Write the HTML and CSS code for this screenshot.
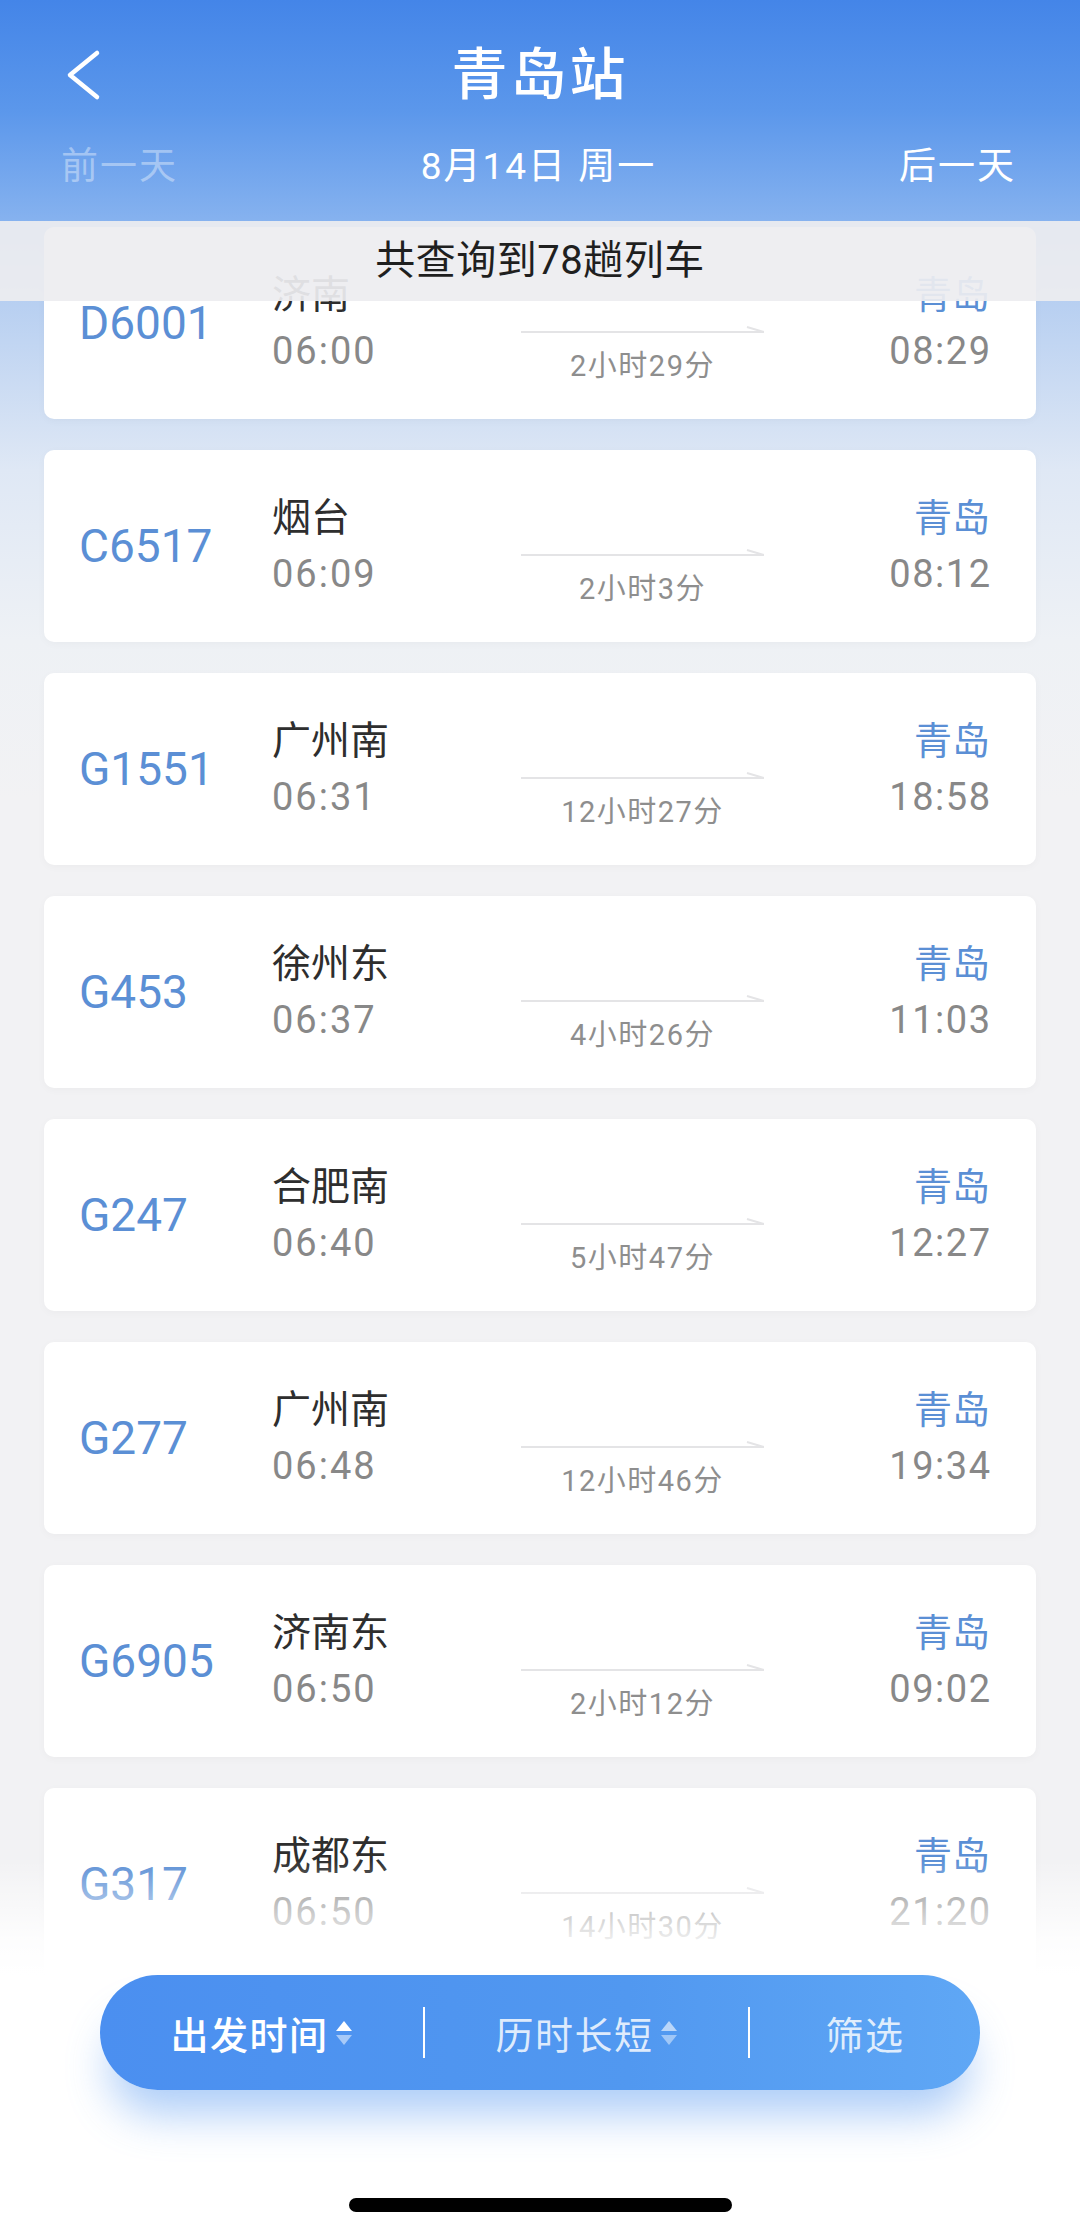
FILE: index.html
```html
<!DOCTYPE html>
<html lang="zh-CN">
<head>
    <meta charset="UTF-8">
    <title>青岛站</title>
    <link rel="stylesheet" href="styles.css">
</head>
<body>
<div class="screen">
    <header class="topbar">
        <div class="nav">
            <a class="back" href="#">
                <svg width="36" height="52" viewBox="0 0 36 52"><path d="M31 4 L4 26 L31 48" fill="none" stroke="#fff" stroke-width="4.5" stroke-linecap="round" stroke-linejoin="round"/></svg>
            </a>
            <h1 class="title">青岛站</h1>
            <span></span>
        </div>
        <div class="dates">
            <span class="off">前一天</span>
            <span>8月14日 周一</span>
            <span>后一天</span>
        </div>
    </header>

    <div class="result-tip">共查询到78趟列车</div>

    <ul class="train-list">
        <li class="train-item">
            <div class="train-no">D6001</div>
            <div class="depart"><span class="station">济南</span><span class="time">06:00</span></div>
            <div class="route"><svg width="243" height="12" viewBox="0 0 243 12"><path d="M0 10 H243 L226 5" fill="none" stroke="#e4e4e6" stroke-width="2"/></svg><span class="duration">2小时29分</span></div>
            <div class="arrive"><span class="station">青岛</span><span class="time">08:29</span></div>
        </li>
        <li class="train-item">
            <div class="train-no">C6517</div>
            <div class="depart"><span class="station">烟台</span><span class="time">06:09</span></div>
            <div class="route"><svg width="243" height="12" viewBox="0 0 243 12"><path d="M0 10 H243 L226 5" fill="none" stroke="#e4e4e6" stroke-width="2"/></svg><span class="duration">2小时3分</span></div>
            <div class="arrive"><span class="station">青岛</span><span class="time">08:12</span></div>
        </li>
        <li class="train-item">
            <div class="train-no">G1551</div>
            <div class="depart"><span class="station">广州南</span><span class="time">06:31</span></div>
            <div class="route"><svg width="243" height="12" viewBox="0 0 243 12"><path d="M0 10 H243 L226 5" fill="none" stroke="#e4e4e6" stroke-width="2"/></svg><span class="duration">12小时27分</span></div>
            <div class="arrive"><span class="station">青岛</span><span class="time">18:58</span></div>
        </li>
        <li class="train-item">
            <div class="train-no">G453</div>
            <div class="depart"><span class="station">徐州东</span><span class="time">06:37</span></div>
            <div class="route"><svg width="243" height="12" viewBox="0 0 243 12"><path d="M0 10 H243 L226 5" fill="none" stroke="#e4e4e6" stroke-width="2"/></svg><span class="duration">4小时26分</span></div>
            <div class="arrive"><span class="station">青岛</span><span class="time">11:03</span></div>
        </li>
        <li class="train-item">
            <div class="train-no">G247</div>
            <div class="depart"><span class="station">合肥南</span><span class="time">06:40</span></div>
            <div class="route"><svg width="243" height="12" viewBox="0 0 243 12"><path d="M0 10 H243 L226 5" fill="none" stroke="#e4e4e6" stroke-width="2"/></svg><span class="duration">5小时47分</span></div>
            <div class="arrive"><span class="station">青岛</span><span class="time">12:27</span></div>
        </li>
        <li class="train-item">
            <div class="train-no">G277</div>
            <div class="depart"><span class="station">广州南</span><span class="time">06:48</span></div>
            <div class="route"><svg width="243" height="12" viewBox="0 0 243 12"><path d="M0 10 H243 L226 5" fill="none" stroke="#e4e4e6" stroke-width="2"/></svg><span class="duration">12小时46分</span></div>
            <div class="arrive"><span class="station">青岛</span><span class="time">19:34</span></div>
        </li>
        <li class="train-item">
            <div class="train-no">G6905</div>
            <div class="depart"><span class="station">济南东</span><span class="time">06:50</span></div>
            <div class="route"><svg width="243" height="12" viewBox="0 0 243 12"><path d="M0 10 H243 L226 5" fill="none" stroke="#e4e4e6" stroke-width="2"/></svg><span class="duration">2小时12分</span></div>
            <div class="arrive"><span class="station">青岛</span><span class="time">09:02</span></div>
        </li>
        <li class="train-item">
            <div class="train-no">G317</div>
            <div class="depart"><span class="station">成都东</span><span class="time">06:50</span></div>
            <div class="route"><svg width="243" height="12" viewBox="0 0 243 12"><path d="M0 10 H243 L226 5" fill="none" stroke="#e4e4e6" stroke-width="2"/></svg><span class="duration">14小时30分</span></div>
            <div class="arrive"><span class="station">青岛</span><span class="time">21:20</span></div>
        </li>
    </ul>

    <div class="bottom-panel">
        <div class="sort-bar">
            <div class="sort-item active">出发时间
                <svg class="sort-icon" width="18" height="30" viewBox="0 0 18 30"><path d="M1 13 L9 3 L17 13 Z" fill="#fff"/><path d="M1 17 L17 17 L9 27 Z" fill="rgba(255,255,255,0.5)"/></svg>
            </div>
            <div class="sort-item">历时长短
                <svg class="sort-icon" width="18" height="30" viewBox="0 0 18 30"><path d="M1 13 L9 3 L17 13 Z" fill="rgba(255,255,255,0.6)"/><path d="M1 17 L17 17 L9 27 Z" fill="rgba(255,255,255,0.45)"/></svg>
            </div>
            <div class="sort-item">筛选</div>
        </div>
        <div class="home-bar"></div>
    </div>
</div>
</body>
</html>
```

FILE: styles.css
```css
*{
    padding: 0;
    margin: 0;
    box-sizing: border-box;
}
body{
    font-family: Roboto, "Noto Sans CJK SC", sans-serif;
    background: #f2f2f4;
}
ul,li{
    list-style: none;
}
.screen{
    width: 1080px;
    height: 2234px;
    position: relative;
    overflow: hidden;
    background: linear-gradient(180deg, #4485e8 0, #5b97eb 110px, #86b2ef 221px, #b7cff1 300px, #dfe8f5 470px, #eef1f5 640px, #f2f2f4 800px, #f2f2f4 100%);
}

/* header */
.topbar{
    height: 221px;
    padding-top: 40px;
    color: #fff;
}
.nav{
    display: grid;
    grid-template-columns: 1fr auto 1fr;
    align-items: center;
    height: 70px;
}
.nav .back{
    display: flex;
    padding-left: 66px;
}
.nav .title{
    font-size: 56px;
    font-weight: 500;
    line-height: 70px;
    letter-spacing: 3px;
}
.dates{
    display: flex;
    justify-content: space-between;
    margin-top: 32px;
    padding: 0 64px 0 61px;
    height: 50px;
    line-height: 50px;
    font-size: 37px;
    letter-spacing: 2px;
}
.dates .off{
    color: rgba(255,255,255,0.38);
}

.result-tip{
    position: absolute;
    top: 221px;
    left: 0;
    right: 0;
    z-index: 5;
    height: 80px;
    line-height: 80px;
    text-align: center;
    font-size: 40px;
    letter-spacing: 0.5px;
    color: #1f1f1f;
    background: rgba(237,237,240,0.93);
}

/* list */
.train-list{
    padding: 6px 44px 0;
}
.train-list .train-item{
    display: flex;
    align-items: center;
    height: 192px;
    margin-bottom: 31px;
    padding: 0 46px 0 35px;
    background: #fff;
    border-radius: 10px;
    box-shadow: 0 2px 8px rgba(0,0,0,0.03);
}
.train-item .train-no{
    width: 193px;
    font-size: 46px;
    color: #5b8fd5;
}
.train-item .depart,
.train-item .arrive{
    display: flex;
    flex-direction: column;
}
.train-item .depart{
    width: 249px;
}
.train-item .arrive{
    flex: 1;
    align-items: flex-end;
}
.train-item .station{
    font-size: 39px;
    line-height: 50px;
    color: #2e2e2e;
}
.train-item .arrive .station{
    font-size: 38px;
    color: #5b8fd5;
}
.train-item .time{
    margin-top: 6px;
    font-size: 38px;
    line-height: 50px;
    letter-spacing: 2px;
    color: #888;
}
.train-item .arrive .time{
    letter-spacing: 1.5px;
    margin-right: -1.5px;
}
.train-item .route{
    align-self: flex-start;
    width: 243px;
    padding-top: 95px;
    text-align: center;
}
.train-item .route svg{
    display: block;
}
.train-item .duration{
    display: block;
    margin-top: 15px;
    font-size: 29px;
    line-height: 34px;
    letter-spacing: 1.5px;
    color: #8e8e8e;
}

/* bottom */
.bottom-panel{
    position: absolute;
    left: 0;
    right: 0;
    bottom: 0;
    z-index: 6;
    height: 374px;
    padding-top: 115px;
    background: linear-gradient(180deg, rgba(255,255,255,0) 0, rgba(255,255,255,0.85) 80px, #fff 115px);
}
.sort-bar{
    display: flex;
    align-items: center;
    height: 115px;
    margin: 0 100px;
    border-radius: 58px;
    background: linear-gradient(90deg, #4b8ff0 0%, #5198f0 60%, #5fa7f5 100%);
    box-shadow: 0 34px 44px -10px rgba(74,144,240,0.45);
    color: rgba(255,255,255,0.82);
    font-size: 38px;
    letter-spacing: 1.5px;
}
.sort-bar .sort-item{
    display: flex;
    justify-content: center;
    align-items: center;
    gap: 6px;
    height: 51px;
}
.sort-bar .sort-item:nth-child(1){
    width: 323px;
}
.sort-bar .sort-item:nth-child(2){
    width: 325px;
    border-left: 2px solid #fff;
}
.sort-bar .sort-item:nth-child(3){
    flex: 1;
    border-left: 2px solid #fff;
}
.sort-bar .sort-item.active{
    color: #fff;
    font-weight: 500;
}
.home-bar{
    width: 383px;
    height: 14px;
    margin: 108px auto 0;
    border-radius: 7px;
    background: #000;
}
```
